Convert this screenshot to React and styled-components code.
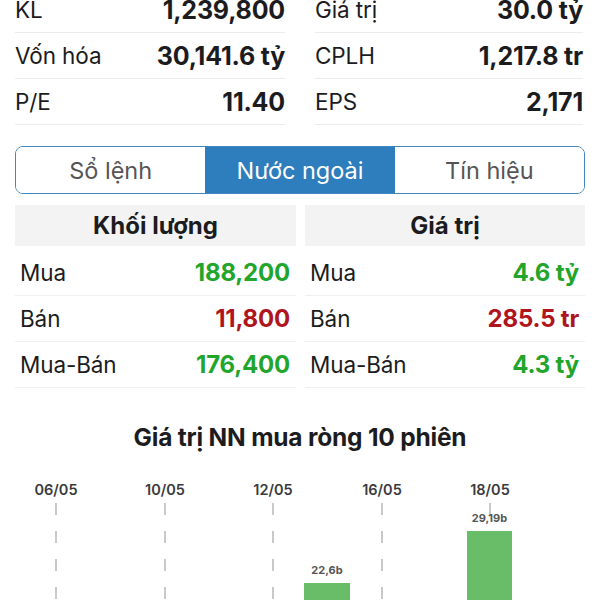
import React from "react";
import styled, { createGlobalStyle } from "styled-components";

const Global = createGlobalStyle`
  html, body { margin: 0; padding: 0; background: #fff; }
  body { font-family: Inter, "Noto Sans", "Liberation Sans", sans-serif; color: #1c1c1e; overflow: hidden; }
`;

const Page = styled.div`
  width: 600px;
  height: 600px;
  overflow: hidden;
`;

const StatsGrid = styled.div`
  display: grid;
  grid-template-columns: 270px 268px;
  column-gap: 30px;
  padding: 0 17px 0 15px;
  margin-top: -13px;
`;

const StatRow = styled.div`
  display: flex;
  justify-content: space-between;
  align-items: center;
  height: 45px;
  border-bottom: 1px solid #ececec;
  font-size: 22.5px;
`;

const Label = styled.span`
  font-weight: 400;
  color: #1c1c1e;
  letter-spacing: -0.1px;
`;

const Value = styled.span`
  font-weight: 700;
  font-size: ${(p) => p.$size || 25}px;
  letter-spacing: -0.2px;
  color: ${(p) => p.$color || "#1c1c1e"};
`;

const Tabs = styled.div`
  display: grid;
  grid-template-columns: 1fr 1fr 1fr;
  margin: 21px 15px 0 15px;
  height: 46px;
  border: 1.5px solid #4285bf;
  border-radius: 8px;
  overflow: hidden;
`;

const Tab = styled.div`
  display: flex;
  align-items: center;
  justify-content: center;
  font-size: 23.5px;
  color: ${(p) => (p.$active ? "#fff" : "#555")};
  background: ${(p) => (p.$active ? "#2e7dbc" : "#fff")};
`;

const Panels = styled.div`
  display: grid;
  grid-template-columns: 281px 280px;
  column-gap: 9px;
  margin: 11px 15px 0 15px;
`;

const Panel = styled.div`
  display: flex;
  flex-direction: column;
`;

const PanelHead = styled.div`
  height: 41px;
  background: #f3f3f3;
  display: flex;
  align-items: center;
  justify-content: center;
  font-weight: 700;
  font-size: 24px;
  margin-bottom: 4px;
`;

const DataRow = styled.div`
  display: flex;
  justify-content: space-between;
  align-items: center;
  height: 45px;
  padding: 0 6px 0 5px;
  border-bottom: 1px solid #efefef;
  font-size: 22.5px;
`;

const ChartTitle = styled.div`
  text-align: center;
  font-weight: 700;
  font-size: 24.5px;
  letter-spacing: -0.2px;
  margin-top: 35px;
  height: 28px;
  line-height: 28px;
`;

const ChartSvg = styled.svg`
  display: block;
  margin-top: 24px;
`;

const GREEN = "#22a52b";
const RED = "#b0141c";

const stats = [
  [["KL", "1,239,800"], ["Giá trị", "30.0 tỷ"]],
  [["Vốn hóa", "30,141.6 tỷ"], ["CPLH", "1,217.8 tr"]],
  [["P/E", "11.40"], ["EPS", "2,171"]],
];

const vol = [
  ["Mua", "188,200", GREEN],
  ["Bán", "11,800", RED],
  ["Mua-Bán", "176,400", GREEN],
];
const val = [
  ["Mua", "4.6 tỷ", GREEN],
  ["Bán", "285.5 tr", RED],
  ["Mua-Bán", "4.3 tỷ", GREEN],
];

const dates = [
  ["06/05", 56],
  ["10/05", 165],
  ["12/05", 273],
  ["16/05", 382],
  ["18/05", 490],
];

const FONT = "Inter, 'Liberation Sans', sans-serif";

function Chart() {
  return (
    <ChartSvg width="600" height="140" viewBox="0 475 600 140">
      {dates.map(([d, x]) => (
        <g key={d}>
          <text
            x={x}
            y={495}
            textAnchor="middle"
            fontFamily={FONT}
            fontSize="14.5"
            fontWeight="600"
            fill="#3a3a3c"
          >
            {d}
          </text>
          <line
            x1={x}
            x2={x}
            y1={503}
            y2={615}
            stroke="#c4c4c4"
            strokeWidth="1.8"
            strokeDasharray="12 16"
          />
        </g>
      ))}
      <rect x="304" y="583" width="46" height="40" fill="#6abd68" />
      <text x="327" y="574" textAnchor="middle" fontFamily={FONT} fontSize="11" fontWeight="700" fill="#555">
        22,6b
      </text>
      <rect x="467" y="531" width="45" height="90" fill="#6abd68" />
      <text x="489.5" y="522" textAnchor="middle" fontFamily={FONT} fontSize="11" fontWeight="700" fill="#555">
        29,19b
      </text>
    </ChartSvg>
  );
}

export default function App() {
  return (
    <Page>
      <Global />
      <StatsGrid>
        {stats.map((row) =>
          row.map(([l, v]) => (
            <StatRow key={l}>
              <Label>{l}</Label>
              <Value>{v}</Value>
            </StatRow>
          ))
        )}
      </StatsGrid>
      <Tabs>
        <Tab>Sổ lệnh</Tab>
        <Tab $active>Nước ngoài</Tab>
        <Tab>Tín hiệu</Tab>
      </Tabs>
      <Panels>
        <Panel>
          <PanelHead>Khối lượng</PanelHead>
          {vol.map(([l, v, c]) => (
            <DataRow key={l}>
              <Label>{l}</Label>
              <Value $color={c} $size={24}>{v}</Value>
            </DataRow>
          ))}
        </Panel>
        <Panel>
          <PanelHead>Giá trị</PanelHead>
          {val.map(([l, v, c]) => (
            <DataRow key={l}>
              <Label>{l}</Label>
              <Value $color={c} $size={24}>{v}</Value>
            </DataRow>
          ))}
        </Panel>
      </Panels>
      <ChartTitle>Giá trị NN mua ròng 10 phiên</ChartTitle>
      <Chart />
    </Page>
  );
}
